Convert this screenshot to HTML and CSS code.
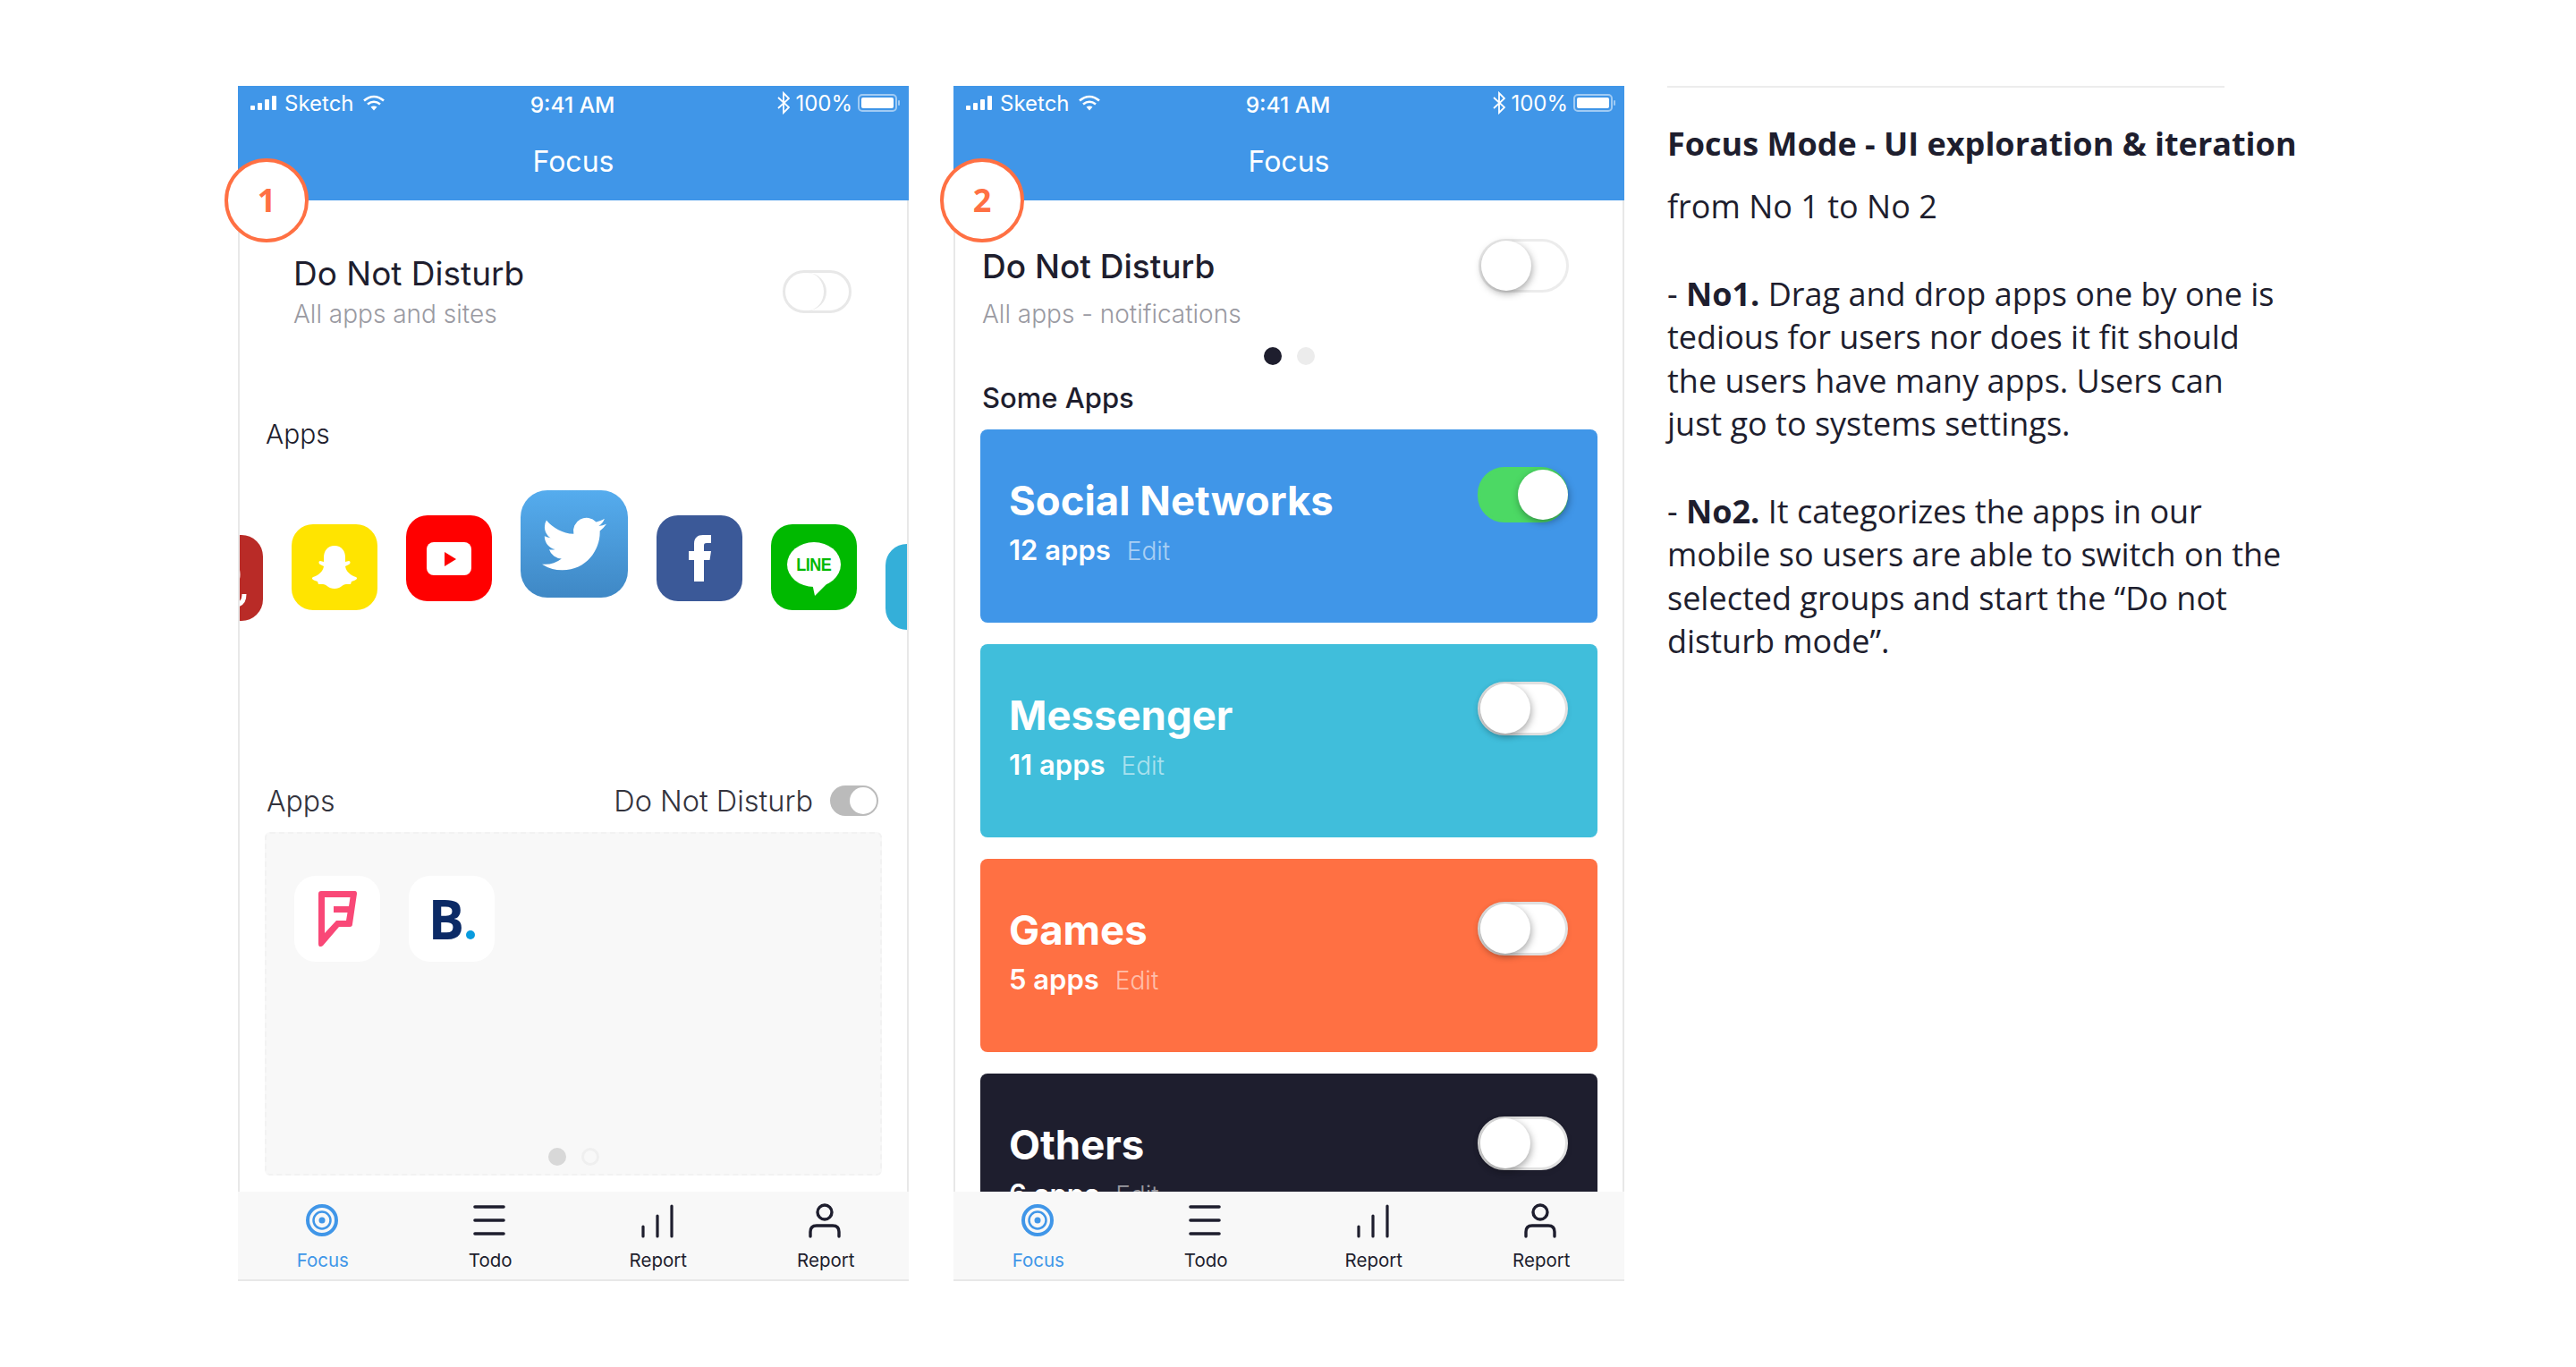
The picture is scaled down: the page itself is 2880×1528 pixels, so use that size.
FILE: index.html
```html
<!DOCTYPE html>
<html lang="en">
<head>
<meta charset="utf-8">
<title>Focus Mode</title>
<link rel="stylesheet" href="styles.css">
</head>
<body>
<main class="page">
  <section class="phone">
    <header class="appbar">
      <div class="status">
        <div class="status-left">
          <svg class="signal" viewBox="0 0 30 16"><rect x="0" y="11" width="5" height="5" rx="1"/><rect x="8" y="8" width="5" height="8" rx="1"/><rect x="16" y="4" width="5" height="12" rx="1"/><rect x="24" y="0" width="5" height="16" rx="1"/></svg>
          <span>Sketch</span>
          <svg class="wifi" viewBox="0 0 26 18"><path d="M2 6.500C9 0.500 17 0.500 24 6.500M6 10.500C10.500 7 15.500 7 20 10.500" fill="none" stroke="#fff" stroke-width="2.600"/><path d="M9.500 13.500C11.500 12 14.500 12 16.500 13.500L13 17.500Z" fill="#fff"/></svg>
        </div>
        <div class="status-time">9:41 AM</div>
        <div class="status-right">
          <svg class="bt" viewBox="0 0 14 26"><path d="M1 7L13 18L7 24V2L13 8L1 19" fill="none" stroke="#fff" stroke-width="1.800"/></svg>
          <span>100%</span>
          <svg class="battery" viewBox="0 0 48 20"><rect x="1" y="1" width="42" height="18" rx="4" fill="none" stroke="#fff" stroke-opacity=".5" stroke-width="2"/><rect x="4" y="4" width="36" height="12" rx="2" fill="#fff"/><rect x="45" y="7" width="2" height="6" rx="1" fill="#fff" fill-opacity=".5"/></svg>
        </div>
      </div>
      <h2 class="appbar-title">Focus</h2>
    </header>
    <div class="badge">1</div>
    <div class="body">
      <div class="dnd-one">
        <div>
          <div class="dnd-title">Do Not Disturb</div>
          <div class="dnd-sub">All apps and sites</div>
        </div>
        <div class="flat-toggle"><span class="flat-knob"></span></div>
      </div>
      <div class="apps-label">Apps</div>
      <div class="carousel">
        <div class="app app-quora">
          <svg viewBox="0 0 96 96"><circle cx="47" cy="44" r="19" fill="none" stroke="#fff" stroke-width="9"/><path d="M66 78Q75 77 75 66" fill="none" stroke="#fff" stroke-width="5"/></svg>
        </div>
        <div class="app app-snap">
          <svg class="logo-snap" viewBox="0 0 52 48"><path fill="#fff" d="M26 0C34 0 38 6 38 13L38 18L42 17C44 17 44 20 42 21L38 23C39 29 44 33 50 35C52 36 51 38 48 39L45 40L44 43L39 43C35 43 33 48 26 48C19 48 17 43 13 43L8 43L7 40L4 39C1 38 0 36 2 35C8 33 13 29 14 23L10 21C8 20 8 17 10 17L14 18L14 13C14 6 18 0 26 0Z"/></svg>
        </div>
        <div class="app app-yt">
          <svg class="logo-yt" viewBox="0 0 50 37"><rect width="50" height="37" rx="8" fill="#fff"/><path d="M20 11L33 19L20 27Z" fill="#f00"/></svg>
        </div>
        <div class="app app-tw">
          <svg class="logo-tw" viewBox="0 0 24 24"><path fill="#fff" d="M23.953 4.570a10 10 0 01-2.825.775 4.958 4.958 0 002.163-2.723c-.951.555-2.005.959-3.127 1.184a4.920 4.920 0 00-8.384 4.482C7.690 8.095 4.067 6.130 1.640 3.162a4.822 4.822 0 00-.666 2.475c0 1.710.870 3.213 2.188 4.096a4.904 4.904 0 01-2.228-.616v.060a4.923 4.923 0 003.946 4.827 4.996 4.996 0 01-2.212.085 4.936 4.936 0 004.604 3.417 9.867 9.867 0 01-6.102 2.105c-.390 0-.779-.023-1.170-.067a13.995 13.995 0 007.557 2.209c9.053 0 13.998-7.496 13.998-13.985 0-.210 0-.420-.015-.630A9.935 9.935 0 0024 4.590z"/></svg>
        </div>
        <div class="app app-fb">
          <svg class="logo-fb" viewBox="0 0 25 52"><path fill="#fff" d="M6 52V28H0V18H6V10C6 3 10 0 16 0H25V9H20C17.500 9 17 10 17 12V18H25L23.500 28H17V52Z"/></svg>
        </div>
        <div class="app app-line">
          <div class="line-bubble"><span class="line-word">LINE</span></div>
        </div>
        <div class="app app-tele"></div>
      </div>
      <div class="apps-head">
        <span>Apps</span>
        <div class="apps-head-right">
          <span>Do Not Disturb</span>
          <div class="grey-toggle"><span class="grey-knob"></span></div>
        </div>
      </div>
      <div class="drop-panel">
        <div class="drop-icons">
          <div class="app app-white">
            <svg class="logo-fs" viewBox="0 0 43 62"><path fill="#f94877" fill-rule="evenodd" d="M0 3Q0 0 3 0H41Q43 0 43 3L38 37Q38 40 35 40H23L5 61Q0 64 0 59ZM7 7V47L20 33H31L32.500 24H17V17H34L35.500 7Z"/></svg>
          </div>
          <div class="app app-white">
            <span class="booking">B<i class="booking-dot"></i></span>
          </div>
        </div>
        <div class="dots">
          <span class="dot dot-grey"></span>
          <span class="dot dot-ring"></span>
        </div>
      </div>
    </div>
    <nav class="tabs">
      <div class="tab tab-active">
        <svg class="tab-icon" viewBox="0 0 36 36"><circle cx="18" cy="18" r="16" fill="none" stroke="#4096e8" stroke-width="4"/><circle cx="18" cy="18" r="9.500" fill="none" stroke="#4096e8" stroke-width="2.500"/><circle cx="18" cy="18" r="3.500" fill="#4096e8"/></svg>
        <span>Focus</span>
      </div>
      <div class="tab">
        <svg class="tab-icon" viewBox="0 0 36 36"><path d="M2 3H34M2 18H34M2 33H34" stroke="#1e1e2e" stroke-width="3.600" stroke-linecap="round"/></svg>
        <span>Todo</span>
      </div>
      <div class="tab">
        <svg class="tab-icon" viewBox="0 0 36 36"><path d="M2 36V25M18 36V13M34 36V2" stroke="#1e1e2e" stroke-width="3.200" stroke-linecap="round"/></svg>
        <span>Report</span>
      </div>
      <div class="tab">
        <svg class="tab-icon" viewBox="0 0 36 36"><circle cx="18" cy="9" r="8" fill="none" stroke="#1e1e2e" stroke-width="3.400"/><path d="M2 36V31C2 26 5 24 9 24H27C31 24 34 26 34 31V36" fill="none" stroke="#1e1e2e" stroke-width="3.400" stroke-linecap="round"/></svg>
        <span>Report</span>
      </div>
    </nav>
  </section>

  <section class="phone">
    <header class="appbar">
      <div class="status">
        <div class="status-left">
          <svg class="signal" viewBox="0 0 30 16"><rect x="0" y="11" width="5" height="5" rx="1"/><rect x="8" y="8" width="5" height="8" rx="1"/><rect x="16" y="4" width="5" height="12" rx="1"/><rect x="24" y="0" width="5" height="16" rx="1"/></svg>
          <span>Sketch</span>
          <svg class="wifi" viewBox="0 0 26 18"><path d="M2 6.500C9 0.500 17 0.500 24 6.500M6 10.500C10.500 7 15.500 7 20 10.500" fill="none" stroke="#fff" stroke-width="2.600"/><path d="M9.500 13.500C11.500 12 14.500 12 16.500 13.500L13 17.500Z" fill="#fff"/></svg>
        </div>
        <div class="status-time">9:41 AM</div>
        <div class="status-right">
          <svg class="bt" viewBox="0 0 14 26"><path d="M1 7L13 18L7 24V2L13 8L1 19" fill="none" stroke="#fff" stroke-width="1.800"/></svg>
          <span>100%</span>
          <svg class="battery" viewBox="0 0 48 20"><rect x="1" y="1" width="42" height="18" rx="4" fill="none" stroke="#fff" stroke-opacity=".5" stroke-width="2"/><rect x="4" y="4" width="36" height="12" rx="2" fill="#fff"/><rect x="45" y="7" width="2" height="6" rx="1" fill="#fff" fill-opacity=".5"/></svg>
        </div>
      </div>
      <h2 class="appbar-title">Focus</h2>
    </header>
    <div class="badge">2</div>
    <div class="body body-two">
      <div class="dnd-two">
        <div>
          <div class="dnd-title dnd-title-two">Do Not Disturb</div>
          <div class="dnd-sub dnd-sub-two">All apps - notifications</div>
        </div>
        <div class="switch switch-light"><span class="knob"></span></div>
      </div>
      <div class="dots dots-two">
        <span class="dot dot-dark"></span>
        <span class="dot dot-pale"></span>
      </div>
      <div class="some-apps">Some Apps</div>
      <div class="cards">
        <article class="card card-blue">
          <div>
            <div class="card-title">Social Networks</div>
            <div class="card-sub"><b>12 apps</b><span class="card-edit">Edit</span></div>
          </div>
          <div class="switch switch-on"><span class="knob"></span></div>
        </article>
        <article class="card card-cyan">
          <div>
            <div class="card-title">Messenger</div>
            <div class="card-sub"><b>11 apps</b><span class="card-edit">Edit</span></div>
          </div>
          <div class="switch"><span class="knob"></span></div>
        </article>
        <article class="card card-orange">
          <div>
            <div class="card-title">Games</div>
            <div class="card-sub"><b>5 apps</b><span class="card-edit">Edit</span></div>
          </div>
          <div class="switch switch-low"><span class="knob"></span></div>
        </article>
        <article class="card card-dark">
          <div>
            <div class="card-title">Others</div>
            <div class="card-sub"><b>6 apps</b><span class="card-edit">Edit</span></div>
          </div>
          <div class="switch switch-low"><span class="knob"></span></div>
        </article>
      </div>
    </div>
    <nav class="tabs">
      <div class="tab tab-active">
        <svg class="tab-icon" viewBox="0 0 36 36"><circle cx="18" cy="18" r="16" fill="none" stroke="#4096e8" stroke-width="4"/><circle cx="18" cy="18" r="9.500" fill="none" stroke="#4096e8" stroke-width="2.500"/><circle cx="18" cy="18" r="3.500" fill="#4096e8"/></svg>
        <span>Focus</span>
      </div>
      <div class="tab">
        <svg class="tab-icon" viewBox="0 0 36 36"><path d="M2 3H34M2 18H34M2 33H34" stroke="#1e1e2e" stroke-width="3.600" stroke-linecap="round"/></svg>
        <span>Todo</span>
      </div>
      <div class="tab">
        <svg class="tab-icon" viewBox="0 0 36 36"><path d="M2 36V25M18 36V13M34 36V2" stroke="#1e1e2e" stroke-width="3.200" stroke-linecap="round"/></svg>
        <span>Report</span>
      </div>
      <div class="tab">
        <svg class="tab-icon" viewBox="0 0 36 36"><circle cx="18" cy="9" r="8" fill="none" stroke="#1e1e2e" stroke-width="3.400"/><path d="M2 36V31C2 26 5 24 9 24H27C31 24 34 26 34 31V36" fill="none" stroke="#1e1e2e" stroke-width="3.400" stroke-linecap="round"/></svg>
        <span>Report</span>
      </div>
    </nav>
  </section>

  <aside class="notes">
    <hr class="notes-rule">
    <h1 class="notes-title">Focus Mode - UI exploration &amp; iteration</h1>
    <p class="notes-text">from No 1 to No 2</p>
    <p class="notes-text notes-gap">- <b>No1.</b> Drag and drop apps one by one is<br>tedious for users nor does it fit should<br>the users have many apps. Users can<br>just go to systems settings.</p>
    <p class="notes-text notes-gap">- <b>No2.</b> It categorizes the apps in our<br>mobile so users are able to switch on the<br>selected groups and start the “Do not<br>disturb mode”.</p>
  </aside>
</main>
</body>
</html>
```

FILE: styles.css
```css
* { box-sizing: border-box; }
html, body { margin: 0; padding: 0; background: #fff; }
body { font-family: Inter, "Liberation Sans", sans-serif; color: #1e1e2e; }

.page { display: flex; align-items: flex-start; height: 1528px; padding: 96px 0 0 266px; overflow: hidden; }

.phone { position: relative; display: flex; flex-direction: column; flex: none; width: 750px; height: 1336px; margin-right: 50px; }

.appbar { flex: none; height: 128px; background: #4096e8; color: #fff; }
.status { display: grid; grid-template-columns: 1fr auto 1fr; align-items: center; height: 42px; padding: 0 14px; font-size: 24px; }
.status-left { display: flex; align-items: center; gap: 8px; margin-top: -4px; }
.status-right { display: flex; align-items: center; justify-content: flex-end; gap: 6px; margin: -4px -5px 0 0; }
.status-time { font-weight: 500; font-size: 24.500px; margin-left: -2px; }
.signal { width: 30px; height: 16px; fill: #fff; }
.wifi { width: 26px; height: 18px; margin-left: 1px; }
.bt { width: 14px; height: 26px; }
.battery { width: 48px; height: 20px; }
.appbar-title { margin: 21px 0 0; text-align: center; font-size: 32px; line-height: 44px; font-weight: 400; }

.badge { position: absolute; left: -15px; top: 81px; display: flex; align-items: center; justify-content: center; width: 94px; height: 94px; border: 4px solid #ff7043; border-radius: 50%; background: #fff; color: #ff7043; font: 700 36px/1 "Open Sans", sans-serif; }

.body { flex: 1; min-height: 0; display: flex; flex-direction: column; overflow: hidden; border-left: 2px solid #e8e8e8; border-right: 2px solid #e8e8e8; }

.dnd-one { display: flex; align-items: center; justify-content: space-between; padding: 60px 62px 0 60px; }
.dnd-title { font-size: 37px; line-height: 44px; font-weight: 400; }
.dnd-sub { margin-top: 6px; font-size: 28px; line-height: 34px; font-weight: 300; color: #9a9aa2; }
.flat-toggle { width: 77px; height: 48px; border: 3px solid #e8e8e8; border-radius: 24px; margin-top: -1px; }
.flat-knob { display: block; width: 46px; height: 42px; border-right: 3px solid #e8e8e8; border-radius: 23px; }

.apps-label { margin: 97px 0 0 29px; font-size: 30px; line-height: 40px; font-weight: 300; }

.carousel { display: flex; align-items: flex-start; gap: 32px; height: 160px; margin: 43px 0 0 -70px; flex: none; }
.app { flex: none; display: flex; align-items: center; justify-content: center; width: 96px; height: 96px; border-radius: 24px; }
.app-quora { margin-top: 50px; background: #b92b27; }
.app-quora svg { width: 96px; height: 96px; }
.app-snap { margin-top: 38px; background: #ffe400; }
.app-yt { margin-top: 28px; background: #f00; }
.app-tw { width: 120px; height: 120px; border-radius: 30px; background: linear-gradient(#55acee, #3f88c5); }
.app-fb { margin-top: 28px; background: #3b5998; }
.app-line { margin-top: 38px; background: #00b900; }
.app-tele { margin-top: 60px; background: #34afd9; }
.logo-snap { width: 52px; height: 48px; }
.logo-yt { width: 50px; height: 37px; }
.logo-tw { width: 72px; height: 72px; }
.logo-fb { width: 25px; height: 52px; }
.line-bubble { position: relative; display: flex; align-items: center; justify-content: center; width: 60px; height: 50px; margin-top: -6px; border-radius: 50%; background: #fff; }
.line-bubble::after { content: ""; position: absolute; left: 28px; bottom: -10px; width: 0; height: 0; border-top: 14px solid #fff; border-left: 3px solid transparent; border-right: 14px solid transparent; }
.line-word { font: 700 20px/1 "Liberation Sans", sans-serif; color: #00b900; letter-spacing: -.5px; transform: scaleX(.9); }

.apps-head { display: flex; align-items: center; justify-content: space-between; height: 40px; margin-top: 167px; padding: 0 32px 0 30px; font-size: 32px; font-weight: 300; color: #33333d; flex: none; }
.apps-head-right { display: flex; align-items: center; gap: 19px; font-size: 32.500px; }
.grey-toggle { width: 54px; height: 34px; padding: 2px; border-radius: 17px; background: #bbb; display: flex; justify-content: flex-end; }
.grey-knob { width: 30px; height: 30px; border-radius: 50%; background: #fff; }

.drop-panel { display: flex; flex-direction: column; justify-content: space-between; flex: none; width: 690px; height: 384px; margin: 15px 0 0 28px; padding: 47px 0 9px 31px; border: 2px dashed #f2f2f2; border-radius: 6px; background: #f8f8f8; }
.drop-icons { display: flex; gap: 32px; }
.app-white { background: #fff; }
.logo-fs { width: 43px; height: 62px; }
.booking { display: flex; align-items: baseline; font: 700 60px/1 "Open Sans", sans-serif; color: #0b2a66; }
.booking-dot { width: 10px; height: 10px; margin-left: 2px; border-radius: 50%; background: #089bde; }

.dots { display: flex; justify-content: center; gap: 17px; margin-left: -31px; }
.dot { width: 20px; height: 20px; border-radius: 50%; }
.dot-grey { background: #d8d8d8; }
.dot-ring { border: 3px solid #efefef; }
.dots-two { margin: 20px 0 0; }
.dot-dark { background: #1e1e2e; }
.dot-pale { background: #ececec; }

.body-two { padding-top: 43px; }
.dnd-two { display: flex; align-items: flex-start; justify-content: space-between; padding: 0 60px 0 30px; flex: none; }
.dnd-two .dnd-title-two { margin-top: 9px; font-size: 37px; font-weight: 500; }
.dnd-sub-two { margin-top: 14px; }
.some-apps { margin: 19px 0 0 30px; font-size: 31px; line-height: 36px; font-weight: 500; flex: none; }

.cards { display: flex; flex-direction: column; gap: 24px; margin: 17px 28px 0; }
.card { display: flex; justify-content: space-between; align-items: flex-start; flex: none; height: 216px; padding: 52px 33px 0 32px; border-radius: 8px; color: #fff; }
.card-blue { background: #4096e8; }
.card-cyan { background: #40bedb; }
.card-orange { background: #ff7043; }
.card-dark { background: #1e1e2e; }
.card-title { font-size: 45.500px; line-height: 56px; font-weight: 700; }
.card-sub { display: flex; align-items: baseline; gap: 18px; margin-top: 7px; font-size: 31px; line-height: 40px; }
.card-sub b { font-weight: 600; }
.card-edit { font-size: 28px; font-weight: 300; opacity: .55; }

.switch { display: flex; align-items: center; flex: none; width: 101px; height: 60px; margin-top: -10px; padding: 0 3px; border: 3px solid #e0e0e0; border-radius: 30px; background: #fff; box-shadow: 0 2px 6px rgba(0, 0, 0, .08); }
.switch-low { margin-top: -4px; }
.switch-light { margin-top: 0; border-color: #ececec; box-shadow: none; }
.switch-on { height: 62px; border-color: #4cd964; background: #4cd964; justify-content: flex-end; padding: 0; box-shadow: none; }
.knob { width: 56px; height: 56px; margin-left: -3px; border-radius: 50%; background: #fff; box-shadow: 1px 3px 8px rgba(0, 0, 0, .35); }
.switch-on .knob { margin: 0 -3px 0 0; }

.tabs { flex: none; display: flex; height: 100px; padding-top: 14px; background: #f8f8f8; border-bottom: 2px solid #e8e8e8; }
.tab { flex: 1; display: flex; flex-direction: column; align-items: center; gap: 16px; font-size: 20.500px; line-height: 22px; }
.tab span { margin-left: 2px; }
.tab-icon { width: 36px; height: 36px; overflow: visible; }
.tab-active { color: #4096e8; }

.notes { flex: none; width: 780px; margin-left: -2px; }
.notes-rule { width: 623px; height: 2px; margin: 0 0 39px; border: 0; background: #ececec; }
.notes-title { margin: 0 0 22px; font: 700 36px/48px "Open Sans", sans-serif; }
.notes-text { margin: 0; font: 400 36px/48.500px "Open Sans", sans-serif; }
.notes-gap { margin-top: 49px; }
.notes-text b { font-weight: 700; }
```
